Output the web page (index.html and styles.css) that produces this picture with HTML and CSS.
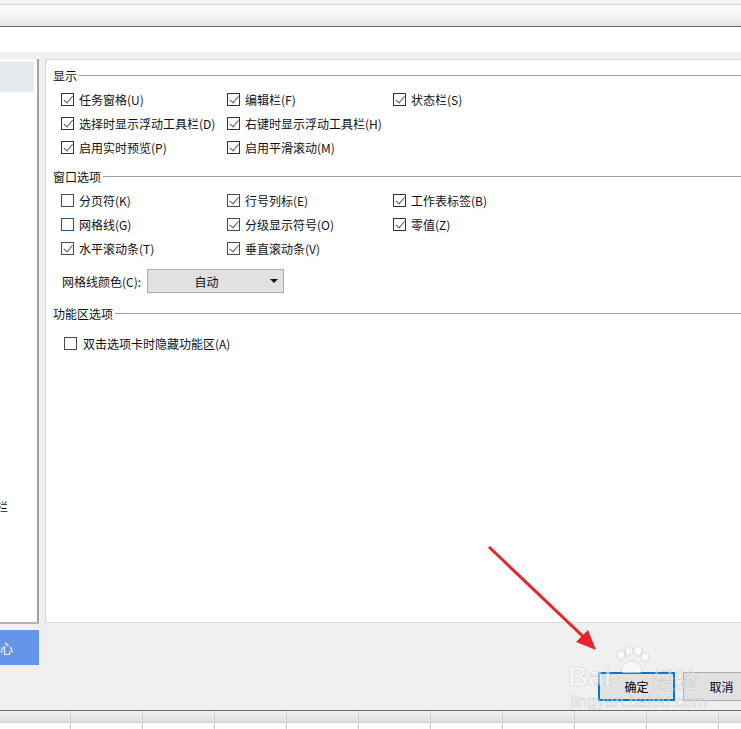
FILE: index.html
```html
<!DOCTYPE html>
<html>

	<head>
		<meta charset="UTF-8">
		<title>选项</title>
		<link rel="stylesheet" href="styles.css">
	</head>

	<body>
		<div class="topbar">
			<div class="strip"></div>
			<div class="tools"></div>
		</div>

		<div class="dialog">
			<div class="title"></div>
			<div class="body">
				<div class="main">
					<div class="side">
						<div class="side-on"></div>
						<div class="side-cut">快速访问工具栏</div>
					</div>

					<div class="panel">
						<div class="group-title">显示</div>
						<div class="grid">
							<label class="opt"><span class="box on dark"></span>任务窗格(U)</label>
							<label class="opt"><span class="box on dark"></span>编辑栏(F)</label>
							<label class="opt"><span class="box on dark"></span>状态栏(S)</label>
							<label class="opt"><span class="box on dark"></span>选择时显示浮动工具栏(D)</label>
							<label class="opt"><span class="box on dark"></span>右键时显示浮动工具栏(H)</label>
							<span></span>
							<label class="opt"><span class="box on dark"></span>启用实时预览(P)</label>
							<label class="opt"><span class="box on dark"></span>启用平滑滚动(M)</label>
						</div>

						<div class="group-title">窗口选项</div>
						<div class="grid">
							<label class="opt"><span class="box"></span>分页符(K)</label>
							<label class="opt"><span class="box on"></span>行号列标(E)</label>
							<label class="opt"><span class="box on dark"></span>工作表标签(B)</label>
							<label class="opt"><span class="box hover"></span>网格线(G)</label>
							<label class="opt"><span class="box on"></span>分级显示符号(O)</label>
							<label class="opt"><span class="box on dark"></span>零值(Z)</label>
							<label class="opt"><span class="box on"></span>水平滚动条(T)</label>
							<label class="opt"><span class="box on"></span>垂直滚动条(V)</label>
						</div>
						<div class="pick">
							<span>网格线颜色(C):</span>
							<div class="select">自动</div>
						</div>

						<div class="group-title">功能区选项</div>
						<label class="opt single"><span class="box"></span>双击选项卡时隐藏功能区(A)</label>
					</div>
				</div>

				<div class="foot">
					<div class="side-btn"><span>备份中心</span></div>
					<div class="actions">
						<button class="btn primary">确定</button>
						<button class="btn">取消</button>
					</div>
				</div>
			</div>
		</div>

		<div class="sheet">
			<div class="sheet-head"></div>
			<div class="sheet-row"></div>
		</div>

		<!-- 水印 -->
		<div class="mark">
			<svg class="paw" width="40" height="30" viewBox="0 0 40 30">
				<ellipse cx="9" cy="9" rx="4" ry="5" />
				<ellipse cx="17" cy="5" rx="4" ry="5" />
				<ellipse cx="26" cy="5" rx="4" ry="5" />
				<ellipse cx="33" cy="11" rx="4" ry="5" />
				<path d="M12 27 C8 27 9 20 14 17 C18 14 23 14 27 18 C31 22 31 27 27 27 Z" />
			</svg>
			<span class="mark-big">Bai</span>
			<span class="mark-cn">经验</span>
			<span class="mark-url">jingyan.baidu.com</span>
		</div>

		<svg class="arrow" width="741" height="729" viewBox="0 0 741 729">
			<line x1="489" y1="547" x2="592" y2="645" />
			<path d="M596 650 L576 642 L588 630 Z" />
		</svg>
	</body>

</html>
```

FILE: styles.css
```css
* {
	box-sizing: border-box;
}

body {
	margin: 0;
	width: 741px;
	height: 729px;
	overflow: hidden;
	position: relative;
	font-family: "Noto Sans CJK SC", "Liberation Sans", sans-serif;
	font-size: 12px;
	color: #111;
	background-color: #fff;
}

.topbar .strip {
	height: 5px;
	background-color: #f3f4f6;
	border-bottom: 1px solid #d5d8dc;
}

.topbar .tools {
	height: 22px;
	background: linear-gradient(#fdfdfd, #f7f7f7 50%, #e4e4e4);
	border-bottom: 1px solid #6b6b6b;
}

.dialog {
	border-bottom: 1px solid #6d6d6d;
	background-color: #f0f0f0;
}

.dialog .title {
	height: 25px;
	background-color: #fff;
}

.body {
	padding-top: 7px;
}

.main {
	display: flex;
	width: 800px;
}

.side {
	width: 39px;
	height: 565px;
	background-color: #fff;
	border-right: 2px solid #a3a3a3;
	border-bottom: 2px solid #b4b4b4;
	display: flex;
	flex-direction: column;
}

.side-on {
	margin-top: 3px;
	width: 34px;
	height: 30px;
	background-color: #e6e9ee;
}

.side-cut {
	margin-top: 399px;
	height: 30px;
	display: flex;
	align-items: center;
	justify-content: flex-end;
	padding-right: 29px;
	white-space: nowrap;
	overflow: hidden;
}

.panel {
	flex: 1;
	margin-left: 6px;
	height: 564px;
	background-color: #fff;
	border: 1px solid #d9d9d9;
	padding-left: 7px;
}

.group-title {
	display: flex;
	align-items: center;
	gap: 2px;
	height: 16px;
	margin-top: 7px;
	white-space: nowrap;
}

.group-title::after {
	content: "";
	flex: 1;
	height: 1px;
	background-color: #a0a0a0;
}

.group-title + .grid {
	margin-top: 4px;
}

.grid + .group-title {
	margin-top: 9px;
}

.pick + .group-title {
	margin-top: 12px;
}

.grid {
	display: grid;
	grid-template-columns: 166px 166px 166px;
	padding-left: 8px;
}

.opt {
	display: flex;
	align-items: center;
	gap: 5px;
	height: 24px;
	white-space: nowrap;
}

.opt.single {
	margin-top: 10px;
	padding-left: 11px;
	gap: 6px;
}

.box {
	width: 13px;
	height: 13px;
	border: 1px solid #4a4a4a;
	background-color: #fff;
	position: relative;
	flex: none;
}

.box.dark {
	border-color: #333;
}

.box.hover {
	border-color: #24528f;
}

.box.on::after {
	content: "";
	position: absolute;
	left: 3px;
	top: 0px;
	width: 4px;
	height: 8px;
	border-right: 1px solid #5a5a5a;
	border-bottom: 1px solid #5a5a5a;
	transform: rotate(40deg);
	transform-origin: 60% 60%;
}

.pick {
	display: flex;
	align-items: center;
	gap: 6px;
	margin-top: 9px;
	padding-left: 9px;
	height: 24px;
}

.select {
	width: 137px;
	height: 24px;
	background-color: #e1e1e1;
	border: 1px solid #adadad;
	display: flex;
	align-items: center;
	justify-content: center;
	padding-right: 18px;
	position: relative;
}

.select::after {
	content: "";
	position: absolute;
	right: 5px;
	top: 9px;
	border-left: 4px solid transparent;
	border-right: 4px solid transparent;
	border-top: 4px solid #111;
}

.foot {
	display: flex;
	flex-direction: column;
	padding-bottom: 9px;
}

.side-btn {
	margin-top: 6px;
	width: 39px;
	height: 35px;
	background-color: #6495e6;
	color: #fff;
	font-size: 13px;
	display: flex;
	align-items: center;
	justify-content: flex-end;
	padding-right: 26px;
	white-space: nowrap;
	overflow: hidden;
}

.actions {
	display: flex;
	gap: 8px;
	margin-top: 7px;
	padding-left: 598px;
	width: 850px;
}

.btn {
	width: 77px;
	height: 29px;
	background-color: #e1e1e1;
	border: 1px solid #adadad;
	font-family: inherit;
	font-size: 12px;
	color: #000;
	padding: 0;
	flex: none;
}

.btn.primary {
	border: 2px solid #0078d7;
}

.sheet-head {
	height: 12px;
	background: linear-gradient(to right, #c8cfdc 1px, transparent 1px) 70px 0 / 72px 100% repeat-x,
		linear-gradient(#f2f2f2, #dedede);
	border-bottom: 1px solid #cbd2de;
}

.sheet-row {
	height: 10px;
	background: linear-gradient(to right, #c8cfdc 1px, transparent 1px) 70px 0 / 72px 100% repeat-x;
}

.mark {
	position: absolute;
	left: 568px;
	top: 644px;
	width: 140px;
	height: 70px;
	pointer-events: none;
	color: rgba(255, 255, 255, 0.55);
	-webkit-text-stroke: 0.6px rgba(150, 150, 150, 0.4);
}

.paw {
	position: absolute;
	left: 44px;
	top: 2px;
	fill: rgba(255, 255, 255, 0.6);
	stroke: rgba(150, 150, 150, 0.4);
	stroke-width: 0.8;
}

.mark-big {
	position: absolute;
	left: 0;
	top: 18px;
	font-family: "Liberation Sans", sans-serif;
	font-weight: bold;
	font-size: 28px;
	line-height: 30px;
}

.mark-cn {
	position: absolute;
	left: 84px;
	top: 21px;
	font-size: 23px;
	line-height: 26px;
}

.mark-url {
	position: absolute;
	left: 2px;
	top: 49px;
	font-family: "Liberation Sans", sans-serif;
	font-size: 17px;
	line-height: 18px;
}

.arrow {
	position: absolute;
	left: 0;
	top: 0;
	pointer-events: none;
}

.arrow line {
	stroke: #e8252b;
	stroke-width: 3;
}

.arrow path {
	fill: #e8252b;
}
```
